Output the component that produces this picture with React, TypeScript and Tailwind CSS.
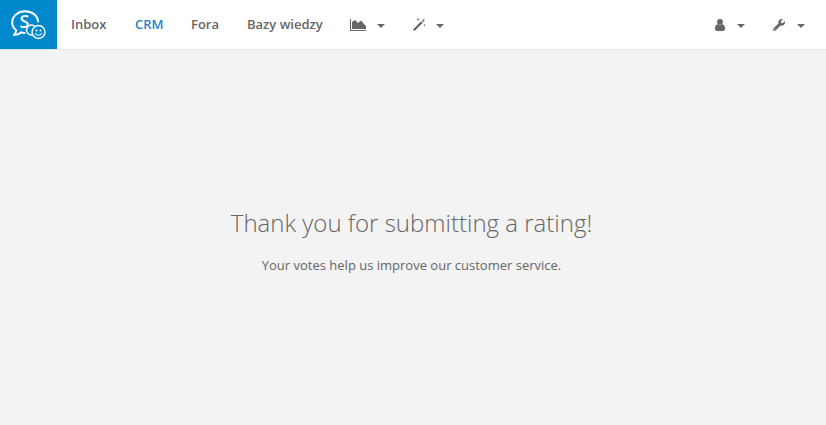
import type { ReactNode } from 'react'
import { FaWrench } from 'react-icons/fa'

const Caret = ({ className }: { className: string }) => (
  <span className={`mt-[2px] h-0 w-0 border-x-4 border-t-4 border-x-transparent border-t-[#666] ${className}`} />
)

const NavIcon = ({ children, className, caret }: { children: ReactNode; className?: string; caret: string }) => (
  <div className={`flex items-center ${className ?? ''}`}>
    {children}
    <Caret className={caret} />
  </div>
)

const AreaIcon = () => (
  <svg width="16" height="12" viewBox="0 0 16 12" fill="#666">
    <path d="M0 0h1v11h15v1H0z" />
    <path d="M2 10V3l3-2 3 3 3-2.500 3 3.500 2 2v3z" />
  </svg>
)

const WandIcon = () => (
  <svg width="13" height="13" viewBox="0 0 13 13" fill="#666">
    <path d="M0 11.400 8.200 3.200l1.600 1.600L1.600 13z" />
    <path d="M8.900 2.500 10 1.400l1.600 1.600-1.100 1.100z" />
    <path d="M5 0l.5 1 1 .5-1 .5-.5 1-.5-1-1-.5 1-.5zM11.500 6l.4.8.8.4-.8.4-.4.8-.4-.8-.8-.4.8-.4zM11 0l.3.7.7.3-.7.3-.3.7-.3-.7-.7-.3.7-.3z" />
  </svg>
)

const UserIcon = () => (
  <svg width="10" height="12" viewBox="0 0 10 12" fill="#666">
    <circle cx="5" cy="3" r="2.900" />
    <path d="M0 10c0-3 .8-4.500 2.600-4.700C3.300 5.900 4.100 6.200 5 6.200s1.700-.3 2.400-.9C9.200 5.500 10 7 10 10c0 1.200-.8 2-2 2H2c-1.200 0-2-.8-2-2z" />
  </svg>
)

const Logo = () => (
  <svg width="36" height="30" viewBox="0 0 36 30" fill="none" className="mt-[1px]">
    <path
      d="M10 22.500c-1.800 1.700-4.200 2.500-7 2.500 1.300-1.300 2.200-2.900 2.200-4.700C2.800 18.400 1.200 15.800 1.200 12.500 1.200 6 7 1.200 14 1.200s12.800 4.300 13 10.300"
      stroke="#fff"
      strokeWidth="2"
      strokeLinecap="round"
      strokeLinejoin="round"
    />
    <path d="M10 22.500c1 .2 2 .4 3.500.4" stroke="#fff" strokeWidth="2" strokeLinecap="round" />
    <text x="8.500" y="18" fill="#fff" fontSize="18" fontWeight="600" fontFamily="Open Sans, sans-serif">
      S
    </text>
    <circle cx="20.500" cy="20" r="5" stroke="#fff" strokeWidth="1.500" />
    <circle cx="27.500" cy="22" r="7.200" fill="#fff" />
    <circle cx="27.500" cy="22" r="5.800" fill="#0088cc" />
    <circle cx="25.500" cy="20.500" r="1" fill="#fff" />
    <circle cx="29.500" cy="20.500" r="1" fill="#fff" />
    <path d="M24.300 23.500c1.600 2.400 4.800 2.400 6.400 0" stroke="#fff" strokeWidth="1.100" strokeLinecap="round" />
  </svg>
)

export default function App() {
  return (
    <div className="flex h-[425px] w-[826px] flex-col overflow-hidden bg-[#f3f3f3] font-['Open_Sans',sans-serif]">
      <header className="flex h-[50px] shrink-0 items-center border-b border-[#e7e7e7] bg-white pr-[21px] text-[13px] font-semibold text-[#666]">
        <div className="flex h-[49px] w-[57px] items-center justify-center bg-[#0088cc]">
          <Logo />
        </div>
        <nav className="ml-[14px] flex items-center">
          <a className="w-[64px]">Inbox</a>
          <a className="w-[56px] text-[#2a7fc1]">CRM</a>
          <a className="w-[56px]">Fora</a>
          <a className="w-[103px]">Bazy wiedzy</a>
        </nav>
        <NavIcon className="w-[63px]" caret="ml-[11px]">
          <AreaIcon />
        </NavIcon>
        <NavIcon caret="ml-[10px]">
          <WandIcon />
        </NavIcon>
        <div className="ml-auto flex items-center gap-[28px]">
          <NavIcon caret="ml-[12px]">
            <UserIcon />
          </NavIcon>
          <NavIcon caret="ml-[12px]">
            <FaWrench className="h-[12px] w-[12px]" />
          </NavIcon>
        </div>
      </header>
      <main className="flex flex-1 flex-col items-center pt-[155px] text-[#666]">
        <h1 className="ml-[-3px] text-[24px] leading-[36px] font-light">Thank you for submitting a rating!</h1>
        <p className="mt-[15px] ml-[-3px] text-[13px] leading-[18px]">Your votes help us improve our customer service.</p>
      </main>
    </div>
  )
}
